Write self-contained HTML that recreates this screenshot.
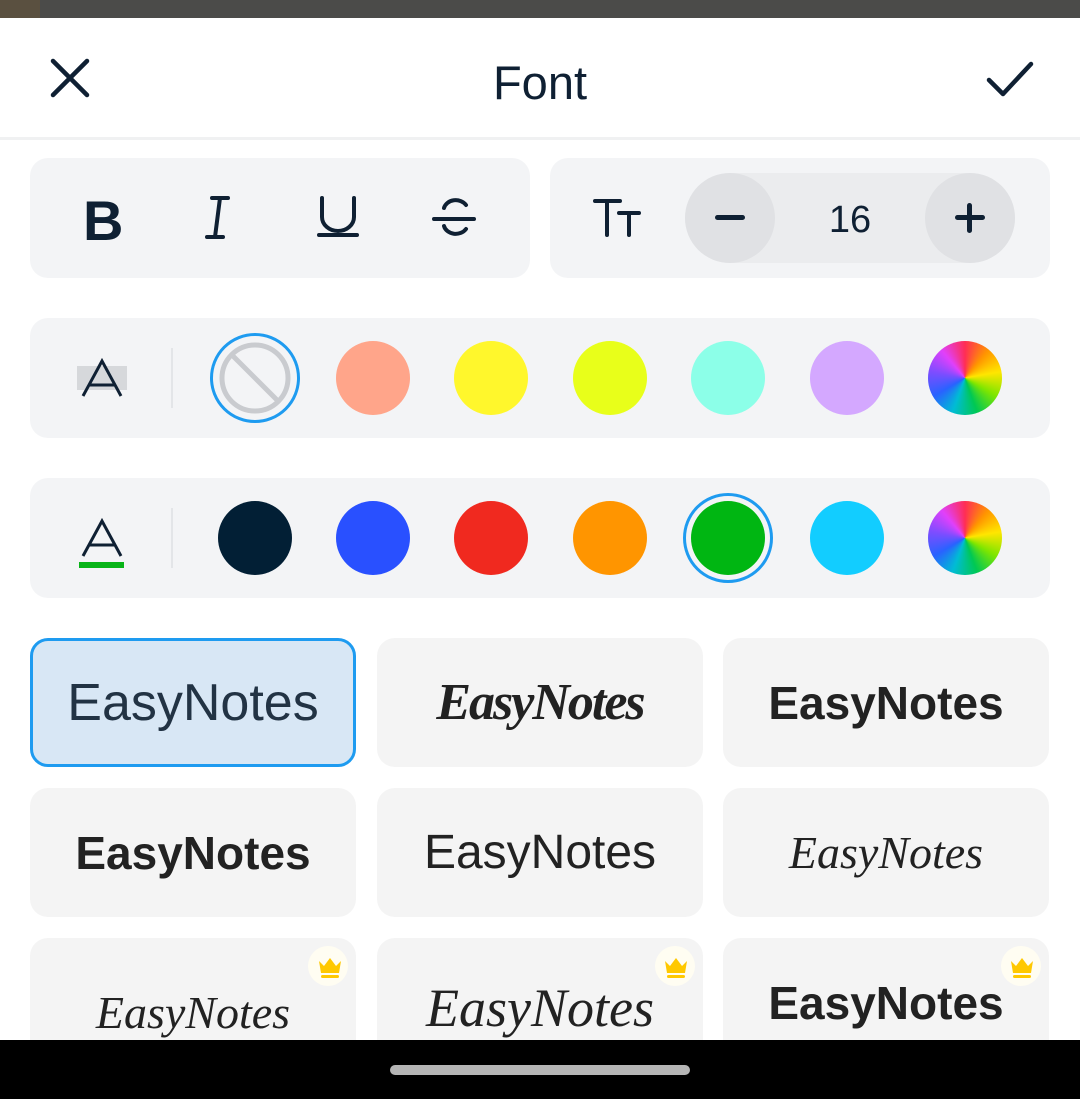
<!DOCTYPE html>
<html><head><meta charset="utf-8"><style>
*{margin:0;padding:0;box-sizing:border-box}
body{width:1080px;height:1099px;position:relative;background:#fff;overflow:hidden;font-family:"Liberation Sans",sans-serif;color:#0f2033}
.a{position:absolute}
.panel{position:absolute;background:#f3f4f6;border-radius:18px}
.c{position:absolute;width:74px;height:74px;border-radius:50%}
.wheel{background:conic-gradient(from 0deg,#ff2d55,#ff9500,#ffe600,#7ee600,#00c853,#00bcd4,#2962ff,#7c4dff,#e040fb,#ff2d55)}
.card{position:absolute;width:326px;height:129px;background:#f4f4f4;border-radius:18px;display:flex;align-items:center;justify-content:center;font-size:46px;color:#222}
.crown{position:absolute;right:8px;top:8px;width:40px;height:40px;border-radius:50%;background:#fffdf2}
</style></head><body>
<div class="a" style="left:0;top:0;width:1080px;height:18px;background:#4b4b49"></div>
<div class="a" style="left:0;top:0;width:40px;height:18px;background:#5a5040"></div>
<div class="a" style="left:0;top:18px;width:1080px;height:1022px;background:#fff"></div>
<svg class="a" style="left:50px;top:58px" width="40" height="40" viewBox="0 0 40 40"><path d="M3 3L37 37M37 3L3 37" stroke="#0f2033" stroke-width="4.5" stroke-linecap="round"/></svg>
<div class="a" style="left:0;top:55px;width:1080px;text-align:center;font-size:47px;color:#0f2033">Font</div>
<svg class="a" style="left:986px;top:60px" width="48" height="40" viewBox="0 0 48 40"><path d="M3 20L17 34L45 4" stroke="#0f2033" stroke-width="4.5" fill="none" stroke-linecap="round" stroke-linejoin="round"/></svg>
<div class="a" style="left:0;top:137px;width:1080px;height:3px;background:#f0f1f2"></div>

<div class="panel" style="left:30px;top:158px;width:500px;height:120px"></div>
<div class="a" style="left:83px;top:188px;font-size:56px;font-weight:bold;color:#0f2033">B</div>
<svg class="a" style="left:200px;top:195px" width="40" height="45" viewBox="0 0 40 45"><path d="M12 3H28M7 42H23M20 3L15 42" stroke="#0f2033" stroke-width="4" stroke-linecap="round"/></svg>
<svg class="a" style="left:313px;top:195px" width="50" height="45" viewBox="0 0 50 45"><path d="M9 3V22A16 14 0 0 0 41 22V3M6 40H44" stroke="#0f2033" stroke-width="4" fill="none" stroke-linecap="round"/></svg>
<svg class="a" style="left:430px;top:193px" width="50" height="50" viewBox="0 0 50 50"><path d="M36 12A12 10 0 0 0 14 15M4 26H44M14 33A12 10 0 0 0 36 36" stroke="#0f2033" stroke-width="4" fill="none" stroke-linecap="round"/></svg>

<div class="panel" style="left:550px;top:158px;width:500px;height:120px"></div>
<svg class="a" style="left:592px;top:198px" width="50" height="40" viewBox="0 0 50 40"><path d="M3 3H28M15 3V37M27 15H47M37 15V37" stroke="#0f2033" stroke-width="4" stroke-linecap="round"/></svg>
<div class="a" style="left:685px;top:173px;width:330px;height:90px;border-radius:45px;background:#ebecee"></div>
<div class="a" style="left:685px;top:173px;width:90px;height:90px;border-radius:50%;background:#e0e1e4"></div>
<div class="a" style="left:925px;top:173px;width:90px;height:90px;border-radius:50%;background:#e0e1e4"></div>
<div class="a" style="left:715px;top:215px;width:30px;height:5px;border-radius:3px;background:#0f2033"></div>
<div class="a" style="left:955px;top:215px;width:30px;height:5px;border-radius:3px;background:#0f2033"></div>
<div class="a" style="left:967px;top:203px;width:5px;height:30px;border-radius:3px;background:#0f2033"></div>
<div class="a" style="left:775px;top:199px;width:150px;text-align:center;font-size:38px;color:#0f2033">16</div>

<div class="panel" style="left:30px;top:318px;width:1020px;height:120px"></div>
<div class="a" style="left:77px;top:366px;width:50px;height:24px;background:#d6d8db"></div>
<svg class="a" style="left:80px;top:358px" width="44" height="40" viewBox="0 0 44 40"><path d="M3 38L22 3L41 38M9 27H35" stroke="#0f2033" stroke-width="3" fill="none"/></svg>
<div class="a" style="left:171px;top:348px;width:2px;height:60px;background:#e3e5e8"></div>
<div class="a" style="left:210px;top:333px;width:90px;height:90px;border-radius:50%;border:3px solid #1e9bf0"></div>
<svg class="a" style="left:218px;top:341px" width="74" height="74" viewBox="0 0 74 74"><circle cx="37" cy="37" r="33" stroke="#c9cbcf" stroke-width="5" fill="none"/><path d="M14 14L60 60" stroke="#c9cbcf" stroke-width="5"/></svg>
<div class="c" style="left:336px;top:341px;background:#ffa58a"></div>
<div class="c" style="left:454px;top:341px;background:#fff72c"></div>
<div class="c" style="left:573px;top:341px;background:#e8ff1a"></div>
<div class="c" style="left:691px;top:341px;background:#8cffe8"></div>
<div class="c" style="left:810px;top:341px;background:#d4a8ff"></div>
<div class="c wheel" style="left:928px;top:341px"></div>

<div class="panel" style="left:30px;top:478px;width:1020px;height:120px"></div>
<svg class="a" style="left:80px;top:518px" width="44" height="40" viewBox="0 0 44 40"><path d="M3 38L22 3L41 38M9 27H35" stroke="#0f2033" stroke-width="3" fill="none"/></svg>
<div class="a" style="left:79px;top:562px;width:45px;height:6px;background:#08b418"></div>
<div class="a" style="left:171px;top:508px;width:2px;height:60px;background:#e3e5e8"></div>
<div class="c" style="left:218px;top:501px;background:#021f35"></div>
<div class="c" style="left:336px;top:501px;background:#2950ff"></div>
<div class="c" style="left:454px;top:501px;background:#f0291f"></div>
<div class="c" style="left:573px;top:501px;background:#ff9500"></div>
<div class="a" style="left:683px;top:493px;width:90px;height:90px;border-radius:50%;border:3px solid #1e9bf0"></div>
<div class="c" style="left:691px;top:501px;background:#00b612"></div>
<div class="c" style="left:810px;top:501px;background:#12cdff"></div>
<div class="c wheel" style="left:928px;top:501px"></div>

<div class="card" style="left:30px;top:638px;background:#d8e7f5;border:3px solid #1e9bf0;color:#223344;font-size:52px">EasyNotes</div>
<div class="card" style="left:377px;top:638px;font-family:'Liberation Serif',serif;font-style:italic;font-weight:bold;letter-spacing:-2px;font-size:52px">EasyNotes</div>
<div class="card" style="left:723px;top:638px;font-weight:bold;font-size:46px">EasyNotes</div>
<div class="card" style="left:30px;top:788px;font-weight:bold;font-size:46px">EasyNotes</div>
<div class="card" style="left:377px;top:788px;font-size:48px">EasyNotes</div>
<div class="card" style="left:723px;top:788px;font-family:'Liberation Serif',serif;font-style:italic;font-size:46px">EasyNotes</div>
<div class="card" style="left:30px;top:938px;font-family:'Liberation Serif',serif;font-style:italic;font-size:46px;padding-top:20px">EasyNotes<div class="crown"></div></div>
<div class="card" style="left:377px;top:938px;font-family:'Liberation Serif',serif;font-style:italic;font-size:54px;padding-top:10px">EasyNotes<div class="crown"></div></div>
<div class="card" style="left:723px;top:938px;font-size:46px;font-weight:bold;padding-top:0px">EasyNotes<div class="crown"></div></div>
<svg class="a" style="left:317px;top:955px" width="26" height="26" viewBox="0 0 26 26"><path d="M2 6L7 11L13 3L19 11L24 6L22 18H4Z" fill="#ffc800"/><rect x="4" y="20" width="18" height="3" rx="1.5" fill="#ffc800"/></svg>
<svg class="a" style="left:663px;top:955px" width="26" height="26" viewBox="0 0 26 26"><path d="M2 6L7 11L13 3L19 11L24 6L22 18H4Z" fill="#ffc800"/><rect x="4" y="20" width="18" height="3" rx="1.5" fill="#ffc800"/></svg>
<svg class="a" style="left:1009px;top:955px" width="26" height="26" viewBox="0 0 26 26"><path d="M2 6L7 11L13 3L19 11L24 6L22 18H4Z" fill="#ffc800"/><rect x="4" y="20" width="18" height="3" rx="1.5" fill="#ffc800"/></svg>

<div class="a" style="left:0;top:1040px;width:1080px;height:59px;background:#000"></div>
<div class="a" style="left:390px;top:1065px;width:300px;height:10px;border-radius:5px;background:#b5b5b5"></div>
</body></html>
